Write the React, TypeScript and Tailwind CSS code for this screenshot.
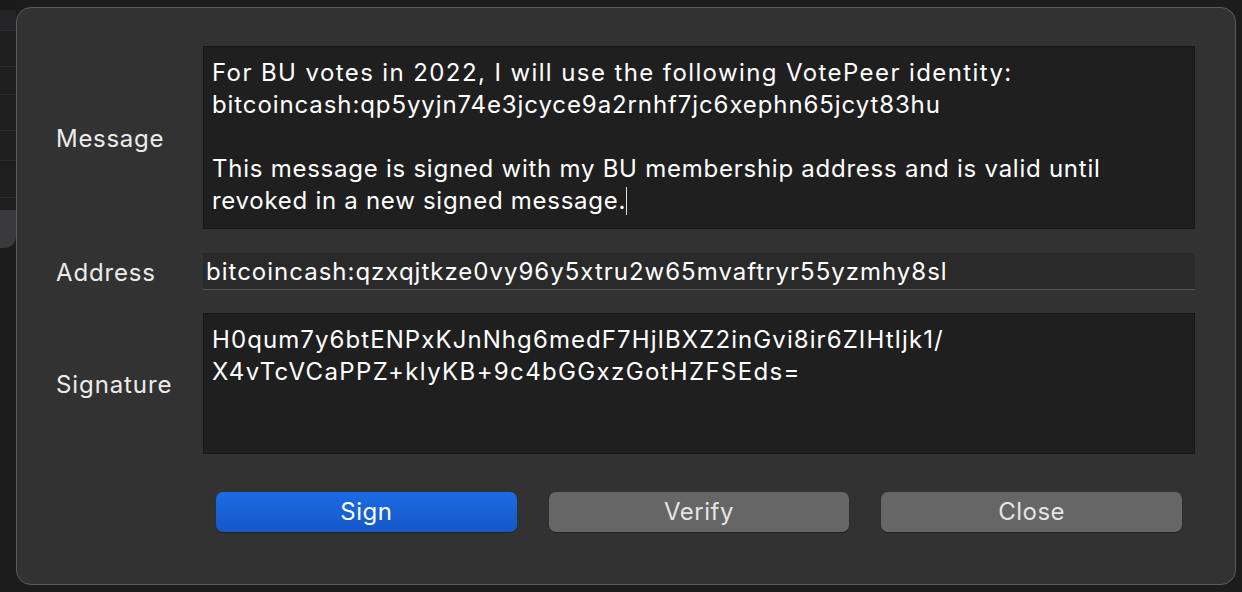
import React from "react";

const font = { fontFamily: "Inter, 'Noto Sans', sans-serif" };

export default function App() {
  return (
    <div
      className="relative w-[1242px] h-[592px] bg-[#1c1c1c] overflow-hidden text-[#ececec]"
      style={font}
    >
      {/* window behind the dialog */}
      <div className="absolute left-0 top-0 w-[16px] h-full flex flex-col">
        <div className="h-[10px] bg-[#1a1a1a]" />
        <div className="h-[21px] bg-[#242426] border-b border-[#2c2c2e]" />
        <div className="h-[36px] bg-[#1e1e1f] border-b border-[#2a2a2c]" />
        <div className="h-[28px] bg-[#1f1f20] border-b border-[#2a2a2c]" />
        <div className="h-[36px] bg-[#1e1e1f] border-b border-[#2a2a2c]" />
        <div className="h-[30px] bg-[#1f1f20] border-b border-[#2a2a2c]" />
        <div className="h-[37px] bg-[#1e1e1f] border-b border-[#2a2a2c]" />
        <div className="h-[12px] bg-[#1f1f20]" />
        <div className="h-[38px] bg-[#3a3a3c] rounded-br-[12px]" />
        <div className="flex-1 bg-[#1c1c1c]" />
      </div>

      <div className="relative ml-[16px] mt-[7px] w-[1220px] h-[578px] rounded-[15px] border border-[#5c5c5c] bg-[#323232] pt-[38px] pl-[39px] pr-[40px] flex flex-col">
        <div className="grid grid-cols-[147px_992px] gap-y-[23px] items-center text-[24px] leading-[32px]">
          <div className="text-[#ececec] pt-[3px] tracking-[0.7px]">Message</div>
          <div className="h-[183px] bg-[#1f1f1f] border border-[#171717] pl-[8px] pt-[10px] text-white">
            <div className="tracking-[1.4px] whitespace-nowrap">For BU votes in 2022, I will use the following VotePeer identity:</div>
            <div className="tracking-[0.9px] whitespace-nowrap">bitcoincash:qp5yyjn74e3jcyce9a2rnhf7jc6xephn65jcyt83hu</div>
            <div>&nbsp;</div>
            <div className="tracking-[0.75px] whitespace-nowrap">This message is signed with my BU membership address and is valid until</div>
            <div className="flex items-center whitespace-nowrap">
              <span className="tracking-[0.72px]">revoked in a new signed message.</span>
              <span className="inline-block w-[1px] h-[28px] bg-[#e0e0e0]" />
            </div>
          </div>

          <div className="text-[#ececec] pt-[3px] tracking-[0.85px]">Address</div>
          <div className="h-[37px] bg-[#2a2a2a] border-t border-[#262626] border-b border-b-[#555555] pl-[3px] pt-[1px] flex items-center text-white mt-[1px] tracking-[1px] whitespace-nowrap">
            bitcoincash:qzxqjtkze0vy96y5xtru2w65mvaftryr55yzmhy8sl
          </div>

          <div className="text-[#ececec] pt-[3px] tracking-[0.9px]">Signature</div>
          <div className="h-[141px] bg-[#1f1f1f] border border-[#171717] pl-[8px] pt-[10px] text-white whitespace-nowrap">
            <div className="tracking-[1.08px]">H0qum7y6btENPxKJnNhg6medF7HjIBXZ2inGvi8ir6ZIHtIjk1/</div>
            <div className="tracking-[1.35px]">X4vTcVCaPPZ+klyKB+9c4bGGxzGotHZFSEds=</div>
          </div>
        </div>

        <div className="mt-[38px] ml-[160px] w-[966px] grid grid-cols-3 gap-[32px] text-[24px]">
          <button className="h-[40px] rounded-[7px] bg-gradient-to-b from-[#1b6ce6] to-[#1557c6] text-white tracking-[0.5px] shadow-[0_1px_1px_rgba(0,0,0,0.35)]">
            Sign
          </button>
          <button className="h-[40px] rounded-[7px] bg-[#666666] text-[#e4e4e4] tracking-[0.5px] shadow-[0_1px_1px_rgba(0,0,0,0.35)]">
            Verify
          </button>
          <button className="h-[40px] rounded-[7px] bg-[#666666] text-[#e4e4e4] tracking-[0.5px] shadow-[0_1px_1px_rgba(0,0,0,0.35)]">
            Close
          </button>
        </div>
      </div>
    </div>
  );
}
